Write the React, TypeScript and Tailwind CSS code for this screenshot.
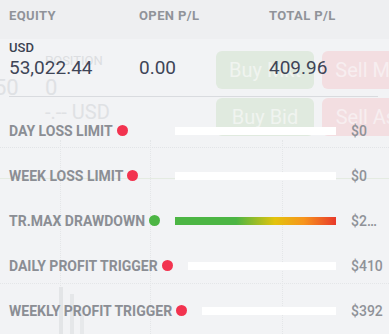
import React from 'react';

// Limits / triggers shown in the overlay
const rows = [
    { label: 'Day Loss Limit', dot: 'bg-[#f2334f]', value: '$0', bar: 'bg-white' },
    { label: 'Week Loss Limit', dot: 'bg-[#f2334f]', value: '$0', bar: 'bg-white' },
    {
        label: 'Tr.Max Drawdown',
        dot: 'bg-[#4cb544]',
        value: '$2500',
        bar: 'bg-[linear-gradient(to_right,#4cb544_0%,#4cb544_38%,#e3c30c_62%,#f7941d_80%,#e8392a_100%)]',
    },
    { label: 'Daily Profit Trigger', dot: 'bg-[#f2334f]', value: '$410', bar: 'bg-white' },
    { label: 'Weekly Profit Trigger', dot: 'bg-[#f2334f]', value: '$392', bar: 'bg-white' },
];

// Faded trading panel + chart that shows through behind the overlay
function Backdrop() {
    return (
        <div className="absolute inset-0 pointer-events-none">
            {/* chart grid */}
            <div className="absolute left-0 right-0 top-[147px] border-t border-dotted border-[#e2e4e7]" />
            <div className="absolute left-0 right-0 top-[178px] border-t border-[#e4ebe1]" />
            <div className="absolute left-0 right-0 top-[283px] border-t border-dotted border-[#e4e6e8]" />
            <div className="absolute top-[140px] bottom-0 left-[60px] border-l border-dotted border-[#e4e6e8]" />
            <div className="absolute top-[140px] bottom-0 left-[150px] border-l border-dotted border-[#e4e6e8]" />
            <div className="absolute top-[140px] bottom-0 left-[282px] border-l border-dotted border-[#e4e6e8]" />
            {/* volume bars */}
            <div className="absolute bottom-0 left-[59px] w-[4px] h-[47px] bg-[#e3e5e7]" />
            <div className="absolute bottom-0 left-[70px] w-[4px] h-[40px] bg-[#e5e7e9]" />
            <div className="absolute bottom-0 left-[80px] w-[4px] h-[24px] bg-[#e7e9eb]" />

            {/* order panel */}
            <div className="pt-[51px] flex flex-col">
                <div className="flex">
                    <div className="w-[216px] shrink-0 relative h-[38px]">
                        <div className="absolute left-[45px] top-[2px] text-[13px] leading-4 text-[#dcdee1] uppercase">Position</div>
                        <div className="absolute left-[-6px] top-[25px] text-[22px] leading-6 text-[#dfe1e4]">50</div>
                        <div className="absolute left-[45px] top-[25px] text-[22px] leading-6 text-[#dfe1e4]">0</div>
                    </div>
                    <div className="flex gap-2 shrink-0">
                        <div className="w-[98px] h-[38px] rounded-md bg-[#e0eadf] flex items-center justify-center text-[20px] text-[#f0f4f0]">Buy Mkt</div>
                        <div className="w-[98px] h-[38px] rounded-md bg-[#f3dee1] flex items-center justify-center text-[20px] text-[#f7eef0]">Sell Mkt</div>
                    </div>
                </div>
                <div className="ml-[9px] w-[369px] mt-[7px] border-t border-[#d9dbdf]" />
                <div className="flex mt-[1px]">
                    <div className="w-[216px] shrink-0 relative h-[38px]">
                        <div className="absolute left-[45px] top-[2px] text-[20px] leading-6 text-[#dfe1e4]">-.-- USD</div>
                    </div>
                    <div className="flex gap-2 shrink-0">
                        <div className="w-[98px] h-[38px] rounded-md bg-[#e0eadf] flex items-center justify-center text-[20px] text-[#f0f4f0]">Buy Bid</div>
                        <div className="w-[98px] h-[38px] rounded-md bg-[#f3dee1] flex items-center justify-center text-[20px] text-[#f7eef0]">Sell Ask</div>
                    </div>
                </div>
            </div>
        </div>
    );
}

export default function App() {
    return (
        <div className="relative w-[389px] h-[334px] overflow-hidden bg-[#f2f3f5] font-['Roboto',sans-serif]">
            <Backdrop />

            <div className="relative flex flex-col">
                {/* Header */}
                <div className="h-[39px] bg-[#eeeff1] flex pl-[9px] pt-[8px] text-[13px] leading-4 font-bold uppercase tracking-[0.4px] text-[#909399]">
                    <div className="w-[130px]">Equity</div>
                    <div className="w-[130px]">Open P/L</div>
                    <div className="w-[120px]">Total P/L</div>
                </div>

                {/* Account summary */}
                <div className="pl-[9px] pt-[1px]">
                    <div className="text-[13px] leading-4 font-medium text-[#3b4150]">USD</div>
                    <div className="flex text-[19px] leading-6 text-[#3e4557]">
                        <div className="w-[130px]">53,022.44</div>
                        <div className="w-[130px]">0.00</div>
                        <div className="w-[120px]">409.96</div>
                    </div>
                </div>

                {/* Limits */}
                <div className="mt-[28px] flex flex-col">
                    {rows.map((r) => (
                        <div key={r.label} className="h-[45px] flex items-center pl-[9px] pr-[6px]">
                            <div className="min-w-[151px] flex items-center gap-1">
                                <span className="text-[14px] leading-4 font-bold uppercase text-[#8b8e94] whitespace-nowrap">{r.label}</span>
                                <span className={`w-[11px] h-[11px] rounded-full shrink-0 ${r.dot}`} />
                            </div>
                            <div className={`flex-1 ml-[15px] h-2 ${r.bar}`} />
                            <div className="w-[32px] ml-[15px] text-[14px] leading-4 font-medium text-[#8f9298] truncate">{r.value}</div>
                        </div>
                    ))}
                </div>
            </div>
        </div>
    );
}
